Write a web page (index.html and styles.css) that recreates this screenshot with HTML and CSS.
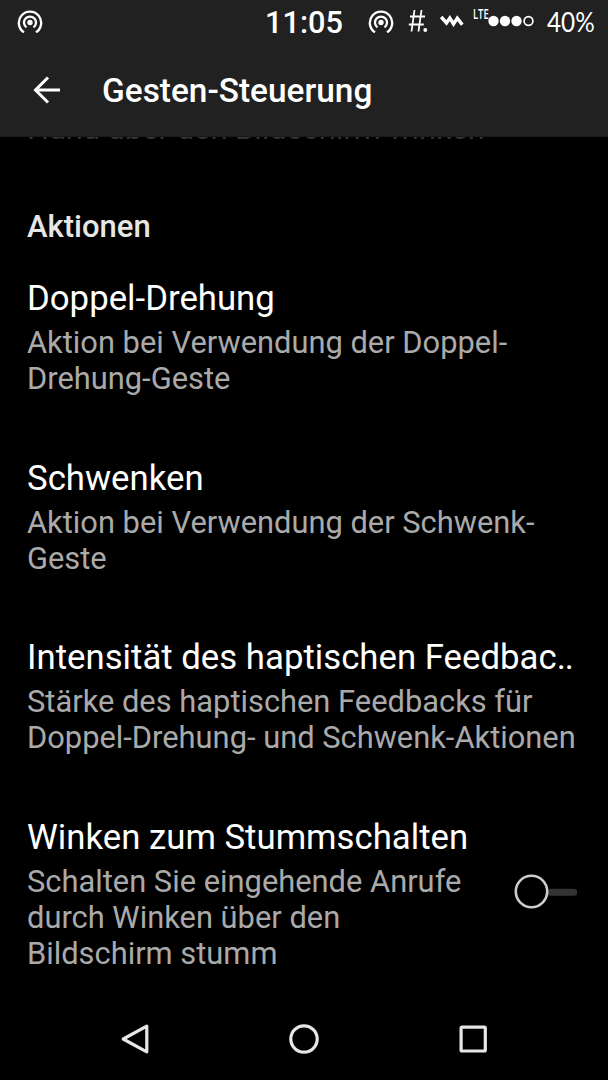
FILE: index.html
```html
<!DOCTYPE html>
<html lang="de">
<head>
<meta charset="utf-8">
<title>Gesten-Steuerung</title>
<link rel="stylesheet" href="styles.css">
</head>
<body>
<div class="screen">
  <header class="header">
    <div class="status">
      <svg class="hotspot" viewBox="0 0 26 26"><circle cx="13" cy="13.500" r="2.700" fill="#fff"/><path d="M9.500 18.400a6 6 0 1 1 7 0M7 23.300a11.200 11.200 0 1 1 12 0"/></svg>
      <span class="clock">11:05</span>
      <svg class="hotspot second" viewBox="0 0 26 26"><circle cx="13" cy="13.500" r="2.700" fill="#fff"/><path d="M9.500 18.400a6 6 0 1 1 7 0M7 23.300a11.200 11.200 0 1 1 12 0"/></svg>
      <svg class="hash" viewBox="0 0 20 24"><path d="M6.500 1 3.500 22.500M13.500 1 10.500 22.500M2 7.500H17M.8 15.500H15.800"/><circle cx="17.300" cy="21" r="1.900"/></svg>
      <svg class="wave" viewBox="0 0 24 12"><path d="M1.200 2 6.500 8 9.800 3.200 13.500 9 17.300 3.200 22.300 9.800"/></svg>
      <span class="lte">LTE</span>
      <svg class="signal" viewBox="0 0 46 12"><circle cx="5.500" cy="6" r="5.200"/><circle cx="17" cy="6" r="5.200"/><circle cx="28.500" cy="6" r="5.200"/><circle class="empty" cx="40.500" cy="6" r="4.400"/></svg>
      <span class="battery">40%</span>
    </div>
    <div class="toolbar">
      <svg class="back" viewBox="0 0 28 28"><path d="M15 1.500 2.500 14 15 26.500M2.500 14H27"/></svg>
      <h1 class="title">Gesten-Steuerung</h1>
    </div>
  </header>
  <main class="content">
    <p class="clipped">Hand über den Bildschirm winken</p>
    <h2 class="section">Aktionen</h2>
    <section class="row">
      <h3 class="name">Doppel-Drehung</h3>
      <p class="summary">Aktion bei Verwendung der Doppel-<br>Drehung-Geste</p>
    </section>
    <section class="row">
      <h3 class="name">Schwenken</h3>
      <p class="summary">Aktion bei Verwendung der Schwenk-<br>Geste</p>
    </section>
    <section class="row">
      <h3 class="name">Intensität des haptischen Feedbac<span class="dots">..</span></h3>
      <p class="summary">Stärke des haptischen Feedbacks für<br>Doppel-Drehung- und Schwenk-Aktionen</p>
    </section>
    <section class="row with-switch">
      <div>
        <h3 class="name">Winken zum Stummschalten</h3>
        <p class="summary">Schalten Sie eingehende Anrufe<br>durch Winken über den<br>Bildschirm stumm</p>
      </div>
      <svg class="switch" viewBox="0 0 64 36"><rect x="34" y="14.700" width="29" height="7" rx="2.500" fill="#333"/><circle cx="17.500" cy="17.500" r="15.700" fill="#000" stroke="#ccc" stroke-width="2.600"/></svg>
    </section>
  </main>
  <nav class="nav">
    <svg viewBox="0 0 32 32"><path d="M27.800 3.200V28.800L4.200 16Z"/></svg>
    <svg viewBox="0 0 32 32"><circle cx="16" cy="16" r="13.200"/></svg>
    <svg viewBox="0 0 32 32"><rect x="4.100" y="4.100" width="24.200" height="23.900" rx="1"/></svg>
  </nav>
</div>
</body>
</html>
```
FILE: styles.css
```css
* { box-sizing: border-box; }
body {
  margin: 0;
  background: #000;
  color: #fff;
  font-family: Roboto, "Noto Sans", sans-serif;
}
h1, h2, h3, p { margin: 0; font-weight: 400; white-space: nowrap; }
svg { display: block; flex: none; }
.screen {
  width: 608px;
  height: 1080px;
  display: flex;
  flex-direction: column;
  overflow: hidden;
}
.header {
  height: 137px;
  flex: none;
  background: #212121;
  border-bottom: 1px solid #1a1a1a;
}
.status {
  height: 45px;
  display: flex;
  align-items: center;
  padding-left: 17px;
}
.status path { fill: none; stroke: #fff; }
.hotspot { width: 26px; height: 26px; margin-bottom: 2px; }
.hotspot path { stroke-width: 2.3; }
.clock {
  margin-left: 222px;
  width: 78px;
  font-size: 30.7px;
  font-weight: 500;
  line-height: 45px;
}
.second { margin-left: 25px; }
.hash { width: 20px; height: 24px; margin-left: 14px; margin-bottom: 3px; fill: #fff; }
.hash path { stroke-width: 1.8; }
.wave { width: 24px; height: 12px; margin-left: 12px; margin-bottom: 4px; }
.wave path { stroke-width: 3.4; }
.lte {
  width: 15px;
  margin-left: 9px;
  margin-bottom: 17px;
  font-family: "Open Sans", sans-serif;
  font-size: 14.5px;
  font-weight: 600;
  line-height: 16px;
  transform: scaleX(.65);
  transform-origin: left;
}
.signal { width: 46px; height: 12px; margin-bottom: 3px; fill: #fff; }
.signal .empty { fill: none; stroke: #fff; stroke-width: 1.7; }
.battery {
  margin-left: 13px;
  font-family: Lato, sans-serif;
  font-size: 27px;
  line-height: 43px;
  margin-bottom: 2px;
  transform: scaleX(.9);
  transform-origin: left;
}
.toolbar {
  height: 91px;
  display: flex;
  align-items: center;
  padding-left: 33px;
}
.back { width: 28px; height: 28px; margin-bottom: 2px; }
.back path { fill: none; stroke: #fff; stroke-width: 3; }
.title {
  margin-left: 41px;
  font-size: 33.4px;
  font-weight: 500;
  line-height: 40px;
  padding-top: 1px;
}
.content {
  height: 863px;
  flex: none;
  padding: 0 27px;
  overflow: hidden;
}
.clipped {
  margin-top: -26px;
  font-size: 30.85px;
  line-height: 36px;
  color: #333;
}
.section {
  margin-top: 62px;
  font-size: 31px;
  font-weight: 500;
  line-height: 36px;
  color: #e6e6e6;
}
.row { height: 179.5px; padding-top: 33px; }
.name { font-size: 34.75px; line-height: 41px; }
.dots { letter-spacing: -1px; }
.summary { margin-top: 6px; font-size: 30.85px; line-height: 36px; color: #aaa; }
.with-switch { display: flex; justify-content: space-between; }
.switch { width: 64px; height: 36px; margin: 57px 3px 0 0; }
.nav {
  height: 80px;
  display: flex;
  justify-content: center;
  align-items: center;
  gap: 137px;
  padding-bottom: 2px;
}
.nav svg { width: 32px; height: 32px; fill: none; stroke: #e6e6e6; stroke-width: 3.2; stroke-linejoin: round; }
```
